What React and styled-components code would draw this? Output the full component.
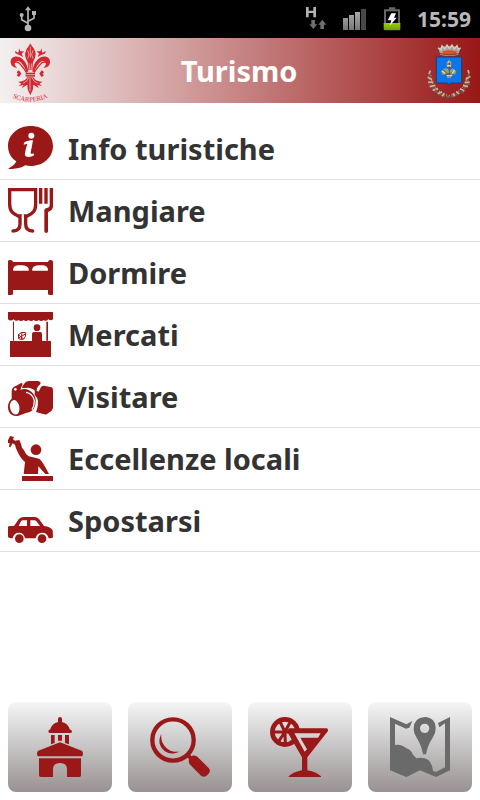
import React from "react";
import styled, { createGlobalStyle } from "styled-components";

const RED = "#9b1818";

const GlobalStyle = createGlobalStyle`
    * {
        box-sizing: border-box;
    }
    body {
        margin: 0;
        background: #fff;
        font-family: "Noto Sans", "Open Sans", sans-serif;
    }
`;

/* ---------- status bar ---------- */

const UsbIcon = () => (
    <svg width="18" height="26" viewBox="0 0 54 78" fill="none" stroke="#b5b5b5" strokeWidth="5">
        <path d="M27 10V60M27 52L8 41V30M27 46L45 37V24" />
        <path d="M27 1L36 13H18Z" fill="#b5b5b5" stroke="none" />
        <circle cx="27" cy="66" r="10" fill="#b5b5b5" stroke="none" />
        <circle cx="8" cy="27" r="6" fill="#b5b5b5" stroke="none" />
        <path d="M39 15H51V27H39Z" fill="#b5b5b5" stroke="none" />
    </svg>
);

const DataIcon = () => (
    <svg width="22" height="24" viewBox="0 0 66 72">
        <path d="M3 0H11V11H25V0H33V31H25V18H11V31H3Z" fill="#b3b3b3" />
        <path d="M19 39H30V52H37L25 66L13 52H19Z" fill="#6e6e6e" />
        <path d="M46 66H57V53H64L52 38L40 53H46Z" fill="#6e6e6e" />
    </svg>
);

const SignalIcon = () => (
    <svg width="24" height="22" viewBox="0 0 24 22">
        <defs>
            <linearGradient id="bars" x1="0" y1="0" x2="0" y2="1">
                <stop offset="0" stopColor="#aaa" />
                <stop offset="1" stopColor="#777" />
            </linearGradient>
        </defs>
        <path d="M0 10H5V22H0ZM6 7H11V22H6ZM12 4H17V22H12Z" fill="url(#bars)" />
        <path d="M18 1H23V22H18Z" fill="#484848" />
    </svg>
);

const BatteryIcon = () => (
    <svg width="18" height="24" viewBox="0 0 54 72">
        <defs>
            <linearGradient id="charge" x1="0" y1="0" x2="0" y2="1">
                <stop offset="0" stopColor="#a0d000" />
                <stop offset="1" stopColor="#6e9b00" />
            </linearGradient>
        </defs>
        <path d="M18 1H37V7H51V69H3V7H18Z" fill="#666" />
        <path d="M9 13H45V64H9Z" fill="#000" />
        <path d="M2 48H52V66Q52 70 49 70H6Q2 70 2 66Z" fill="url(#charge)" />
        <path d="M25 19H39L33 32H41L20 56L25 40H14Z" fill="#fff" />
    </svg>
);

/* ---------- header emblems ---------- */

const LilyLogo = () => (
    <svg width="44" height="62" viewBox="0 -8 132 186" role="img" aria-label="Scarperia">
        <defs>
            <path id="lilyArc" d="M9 162Q66 192 124 162" />
        </defs>
        <g fill="#d2282f">
            <path d="M67 2L70 8Q82 21 83 35Q82 48 75 59L73 82H61L59 59Q51 46 51 34Q53 19 64 8Z" />
            <path d="M61 87C59 68 50 50 34 43C21 38 7 44 8 59C9 70 17 76 27 75C22 70 17 63 23 57C35 49 49 70 55 88ZM73 87C75 68 84 50 100 43C113 38 127 44 126 59C125 70 117 76 107 75C112 70 117 63 111 57C99 49 85 70 79 88Z" />
            <path d="M53 90H81V102H53Z" />
            <path d="M58 104C52 114 43 118 30 117L40 123L32 130L47 127L41 137L58 126L59 140L67 158L75 140L76 126L93 137L87 127L102 130L94 123L104 117C91 118 82 114 76 104Z" />
            <path d="M33 17L37 26L48 26L41 33L45 43L34 37L24 33L32 28ZM101 17L97 26L86 26L93 33L89 43L100 37L110 33L102 28Z" />
            <path d="M20 25L29 29L24 34ZM114 25L105 29L110 34ZM33 83L40 93L33 103L26 98L30 94L26 88ZM101 83L94 93L101 103L108 98L104 94L108 88Z" />
        </g>
        <g fill="none" stroke="#eedddd" strokeWidth="2">
            <path d="M67 12V45M59 23Q67 35 59 48M75 23Q67 35 75 48M63 62L66 84M71 62L69 84" />
            <path d="M53 96H81M66 106V145M62 105Q58 117 45 122M72 105Q76 117 89 122" />
        </g>
        <g fill="none" stroke="#d2282f" strokeWidth="4">
            <path d="M18 60Q28 54 38 66T56 90M116 60Q106 54 96 66T78 90" />
        </g>
        <EmblemText>
            <textPath href="#lilyArc" startOffset="50%" textAnchor="middle">
                SCARPERIA
            </textPath>
        </EmblemText>
    </svg>
);

const TownCrest = () => (
    <svg width="46" height="58" viewBox="0 -4 138 174" role="img" aria-label="Stemma comunale">
        <path d="M37 15Q69 1 103 15L97 34Q69 42 43 34Z" fill="#aaa39a" />
        <path d="M50 24Q69 17 92 24L90 34Q70 38 52 34Z" fill="#dd5128" />
        <path d="M36 13L45 20L48 7L56 17L63 5L70 15L78 5L85 17L93 7L97 19L104 13" fill="none" stroke="#d2cfc4" strokeWidth="4" />
        <path d="M42 31Q69 38 98 31" fill="none" stroke="#6e4c3e" strokeWidth="3" />
        <g fill="none">
            <path d="M10 88Q8 150 69 161Q130 150 129 84" stroke="#6a6851" strokeWidth="5" strokeDasharray="9 3" />
            <path d="M14 95Q18 143 69 157Q117 145 124 95" stroke="#a7a38e" strokeWidth="4" strokeDasharray="3 5" />
            <path d="M5 101L18 109M6 117L22 116M11 130L28 126M20 141L36 136M35 151L48 145M48 159L55 150M133 99L119 108M131 117L116 117M126 130L111 126M115 143L102 136M99 152L91 144M86 159L81 150M13 82L9 92M126 80L129 91" stroke="#c1b99f" strokeWidth="5" />
            <path d="M5 94L15 94M6 125L14 121M25 149L31 139M132 91L123 96M133 124L124 122M112 150L106 141" stroke="#765746" strokeWidth="4" />
        </g>
        <path d="M31 41H107V119H74L69 125L64 119H31Z" fill="#0877ed" stroke="#253b70" strokeWidth="3" />
        <path d="M69 50L77 59L75 71H63L62 59Z" fill="#d0bd7b" />
        <path d="M53 76L65 75L70 83L79 75L91 82L87 94L78 90L75 104L64 104L62 91L50 95L45 84Z" fill="#9b9f80" />
        <path d="M49 78L68 94L91 78M56 99L67 91L84 101M62 62H78M63 73H77M70 57V102" fill="none" stroke="#515a55" strokeWidth="3" />
        <path d="M48 83L57 90M86 80L78 91M62 97H79M66 67H72" stroke="#ead896" strokeWidth="4" />
    </svg>
);

/* ---------- menu icons ---------- */

const InfoIcon = () => (
    <MenuIcon viewBox="0 0 135 135">
        <path d="M68 0C106 0 135 26 135 60S106 120 68 120C62 120 57 119 52 118C36 128 18 130 0 128C12 122 22 114 25 106C9 96 0 79 0 60C0 26 30 0 68 0Z" />
        <circle cx="70" cy="29" r="9" fill="#fff" />
        <path d="M48 50C57 44 66 43 75 43L68 80Q68 86 78 82L77 89Q55 97 51 88Q49 83 58 53L47 56Z" fill="#fff" />
    </MenuIcon>
);

const FoodIcon = () => (
    <MenuIcon viewBox="0 0 135 135">
        <path
            d="M5 5H83V47C83 70 74 77 58 84H30C14 77 5 70 5 47Z"
            fill="none"
            stroke={RED}
            strokeWidth="10"
        />
        <path
            d="M36 86V108Q36 129 15 129M53 86V108Q53 129 74 129"
            fill="none"
            stroke={RED}
            strokeWidth="10"
            strokeLinecap="round"
        />
        <path d="M41 79H48V90H41Z" fill="#fff" />
        <path d="M93 0H103V47H93ZM109 0H119V47H109ZM125 0H135V55Q135 67 120 72V130Q120 135 115 135Q109 135 109 129V67Q109 63 114 61Q125 59 125 52Z" />
    </MenuIcon>
);

const BedIcon = () => (
    <MenuIcon viewBox="0 0 135 135">
        <path d="M0 36V33Q0 30 7 30Q15 30 15 36H120Q120 30 128 30Q135 30 135 36V134Q135 135 127 135Q120 135 120 132V120H15V132Q15 135 8 135H0ZM17 62H61Q64 62 62 56Q59 47 41 46H30Q15 48 15 60Q15 62 17 62ZM74 62H118Q120 62 120 60Q120 48 105 46H93Q76 47 73 56Q71 62 74 62Z" fillRule="evenodd" />
    </MenuIcon>
);

const MarketIcon = () => (
    <MenuIcon viewBox="0 0 135 135">
        <path d="M0 0H135V22Q128 28 121 22Q114 30 107 24Q100 30 92 24Q85 30 77 24Q69 30 62 24Q54 30 47 24Q39 30 31 24Q24 30 17 22Q8 29 0 22ZM15 29H18V86H15ZM115 29H120V86H115ZM6 87H129V135H6ZM72 65Q72 60 78 60H97Q102 60 102 65V88H72Z" />
        <circle cx="87" cy="47" r="10" />
        <path d="M31 68Q41 57 53 62Q55 73 47 81Q38 84 32 80ZM31 68L47 81M42 61L40 82M52 66L32 78" fill="none" stroke={RED} strokeWidth="3" />
    </MenuIcon>
);

const CameraIcon = () => (
    <MenuIcon viewBox="0 0 135 135">
        <path d="M11 74V50Q13 38 25 35L38 28Q41 26 44 30L37 47Q52 43 62 48Q80 57 83 77Q84 94 76 106Q68 116 54 117L32 125Q22 128 14 124Q0 117 0 99Q0 83 11 74Z" />
        <path d="M43 37L51 26Q55 21 63 21H90Q98 22 98 27Q98 32 91 36Q86 41 85 53Q75 42 60 41Q51 41 43 43Z" />
        <path d="M91 55L99 39Q104 34 112 36L131 40Q135 42 135 48V101Q134 108 127 113L116 121Q111 122 105 120L84 114Q93 92 88 70Q85 60 81 55Z" />
        <path d="M80 48L94 54L90 76L80 63Z" />
        <ellipse cx="20" cy="100" rx="14" ry="22" fill="#fff" transform="rotate(-12 20 100)" />
        <path d="M54 55Q74 58 79 80Q79 97 72 107" fill="none" stroke="#fff" strokeWidth="4" />
        <circle cx="22" cy="46" r="4" fill="#fff" />
    </MenuIcon>
);

const CraftIcon = () => (
    <MenuIcon viewBox="0 0 135 135">
        <path d="M6 0L18 3L15 10L21 14L34 12Q39 22 42 35L48 43Q52 54 62 61Q78 64 95 69Q104 77 123 114H112L91 91L90 114H47L51 78Q36 66 28 46Q23 36 21 26L14 22L7 34L3 32L5 21H0V13Z" />
        <circle cx="84" cy="41" r="16" />
        <path d="M42 120H135V135H42Z" />
    </MenuIcon>
);

const CarIcon = () => (
    <MenuIcon viewBox="0 0 135 135">
        <path d="M0 86Q0 84 7 84H18L32 64Q38 57 48 57H80Q87 57 93 63L108 84Q129 86 134 97L135 116Q135 121 122 121Q119 104 102 104Q86 105 83 121H51Q48 104 33 104Q17 104 14 121Q0 120 0 116ZM32 84H57V67H45Q41 67 39 70ZM67 84H96L84 68Q83 67 80 67H67Z" fillRule="evenodd" />
        <circle cx="34" cy="122" r="13" />
        <circle cx="102" cy="122" r="13" />
    </MenuIcon>
);

/* ---------- bottom bar icons ---------- */

const ChurchIcon = () => (
    <TabIcon viewBox="0 0 180 180">
        <path d="M90 0Q96 0 96 6V15Q114 19 119 37Q126 39 126 44Q126 48 120 48H60Q55 48 55 43Q55 39 61 37Q66 19 84 15V6Q84 0 90 0ZM63 54H74V78L63 82ZM84 54H96V71H84ZM105 54H117V82L105 78ZM90 76L155 101Q159 103 159 110Q159 118 154 118H26Q21 118 21 110Q21 103 25 101ZM27 124H153V175Q153 180 148 180H111V157Q111 138 90 138T69 157V180H33Q27 180 27 175Z" />
    </TabIcon>
);

const SearchIcon = () => (
    <TabIcon viewBox="0 0 180 180">
        <circle cx="69" cy="69" r="62" fill="none" stroke={RED} strokeWidth="13" />
        <path d="M34 51C27 64 26 77 32 88C43 109 64 115 88 104C66 106 53 99 43 86C34 75 33 62 34 51Z" />
        <path d="M108 119L118 108L123 117Q133 113 142 119L176 153Q185 163 173 173Q164 184 153 176L119 142Q115 136 117 126Z" />
    </TabIcon>
);

const DrinkIcon = () => (
    <TabIcon viewBox="0 0 180 180">
        <circle cx="45" cy="45" r="38" fill="none" stroke={RED} strokeWidth="14" />
        <path d="M45 45L29 12M45 45L62 12M45 45H8M45 45L23 77M45 45L46 82M45 45H75" fill="none" stroke={RED} strokeWidth="9" />
        <path d="M57 34H169Q175 34 174 42L112 121V160Q139 165 153 178V180H56V178Q70 165 96 160V121L55 50Q51 40 57 34Z" />
        <path d="M73 49H152L144 62H91L111 97L104 104Z" fill="#d4d3d3" />
    </TabIcon>
);

const MapIcon = () => (
    <TabIcon viewBox="0 0 180 180" $color="#6a6a6a">
        <path d="M0 0L49 22L67 12L58 32L48 35L15 20V84Q35 81 49 94Q64 99 69 113L79 124Q98 119 115 129Q128 142 129 162L138 165L165 151V19L148 31L144 18L180 0V160L138 180L90 160L49 180L0 160Z" />
        <path d="M104 0Q137 2 137 35Q137 48 128 62Q112 86 108 112H99Q95 86 80 62Q70 47 71 34Q72 2 104 0ZM104 20A14 14 0 1 0 104 48A14 14 0 1 0 104 20Z" fillRule="evenodd" />
    </TabIcon>
);

const menu = [
    { label: "Info turistiche", Icon: InfoIcon },
    { label: "Mangiare", Icon: FoodIcon },
    { label: "Dormire", Icon: BedIcon },
    { label: "Mercati", Icon: MarketIcon },
    { label: "Visitare", Icon: CameraIcon },
    { label: "Eccellenze locali", Icon: CraftIcon },
    { label: "Spostarsi", Icon: CarIcon },
];

const tabs = [
    { label: "Luoghi", Icon: ChurchIcon },
    { label: "Cerca", Icon: SearchIcon },
    { label: "Locali", Icon: DrinkIcon },
    { label: "Mappa", Icon: MapIcon },
];

const App = () => {
    return (
        <Screen>
            <GlobalStyle />
            <StatusBar>
                <UsbIcon />
                <StatusGroup>
                    <DataIcon />
                    <SignalIcon />
                    <BatteryIcon />
                    <Clock>15:59</Clock>
                </StatusGroup>
            </StatusBar>
            <Header>
                <LilyLogo />
                <Title>Turismo</Title>
                <TownCrest />
            </Header>
            <Menu>
                {menu.map(({ label, Icon }) => (
                    <li key={label}>
                        <MenuLink href="#">
                            <Icon />
                            <span>{label}</span>
                        </MenuLink>
                    </li>
                ))}
            </Menu>
            <TabBar>
                {tabs.map(({ label, Icon }) => (
                    <TabButton key={label} type="button" aria-label={label}>
                        <Icon />
                    </TabButton>
                ))}
            </TabBar>
        </Screen>
    );
};

const Screen = styled.div`
    display: flex;
    flex-direction: column;
    min-height: 100vh;
    background: #fff;
`;

const StatusBar = styled.div`
    display: flex;
    align-items: center;
    justify-content: space-between;
    height: 38px;
    padding: 0 9px 0 19px;
    background: #000;
`;

const StatusGroup = styled.div`
    display: flex;
    align-items: center;
    gap: 16px;
`;

const Clock = styled.span`
    color: #b9b9b9;
    font-size: 21px;
    font-weight: 700;
    line-height: 24px;
`;

const Header = styled.header`
    display: flex;
    align-items: center;
    justify-content: space-between;
    height: 65px;
    padding: 0 8px;
    background: linear-gradient(to right, #f4f0f0, #991717);
`;

const Title = styled.h1`
    margin: 0;
    color: #fff;
    font-size: 29px;
    font-weight: 700;
    line-height: 40px;
`;

const EmblemText = styled.text`
    fill: #d2282f;
    font-family: "Liberation Serif", serif;
    font-size: 20px;
`;

const Menu = styled.ul`
    flex: 1;
    margin: 0;
    padding: 15px 0 0;
    list-style: none;
`;

const MenuLink = styled.a`
    display: flex;
    align-items: center;
    gap: 15px;
    padding: 8px;
    border-bottom: 1px solid #e0e0e0;
    color: #333;
    font-size: 29px;
    font-weight: 700;
    line-height: 44px;
    text-decoration: none;
`;

const MenuIcon = styled.svg`
    flex: none;
    width: 45px;
    height: 45px;
    fill: ${RED};
`;

const TabBar = styled.nav`
    display: grid;
    grid-template-columns: repeat(4, 1fr);
    gap: 16px;
    padding: 8px;
`;

const TabButton = styled.button`
    display: flex;
    align-items: center;
    justify-content: center;
    height: 90px;
    padding: 0;
    border: none;
    border-radius: 8px;
    background: linear-gradient(#f6f6f6, #c6c4c4 50%, #999191);
    cursor: pointer;
`;

const TabIcon = styled.svg`
    width: 60px;
    height: 60px;
    fill: ${({ $color }) => $color || RED};
`;

export default App;
